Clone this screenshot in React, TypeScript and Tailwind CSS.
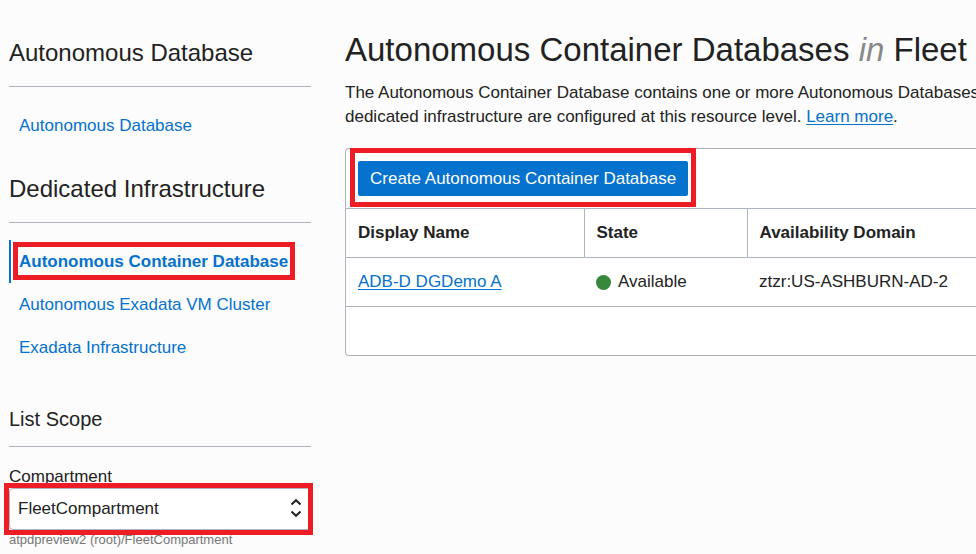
import type { ReactNode } from "react";

function Highlight({ className }: { className: string }) {
  return (
    <span
      aria-hidden="true"
      className={`pointer-events-none absolute border-5 border-[#ee1c25] ${className}`}
    />
  );
}

function NavItem({ active = false, children }: { active?: boolean; children: ReactNode }) {
  return (
    <li
      className={`relative flex h-[43px] items-center border-l-2 pl-2 ${
        active ? "border-[#0572ce] font-bold" : "border-transparent"
      }`}
    >
      <a href="#" aria-current={active ? "page" : undefined} className="text-[#0572ce]">
        {children}
      </a>
      {active && <Highlight className="top-0.5 left-0.5 h-[38px] w-[282px]" />}
    </li>
  );
}

function SectionTitle({ children }: { children: ReactNode }) {
  return (
    <h2 className="border-b border-[#aeb5bf] pb-[19px] text-2xl leading-7">{children}</h2>
  );
}

function TextLink({ children }: { children: ReactNode }) {
  return (
    <a href="#" className="text-[#0572ce] underline decoration-1 underline-offset-2">
      {children}
    </a>
  );
}

function Sidebar() {
  return (
    <aside className="w-[302px] shrink-0 pt-[39px]">
      <nav aria-label="Autonomous Database">
        <SectionTitle>Autonomous Database</SectionTitle>
        <ul className="pt-[17px]">
          <NavItem>Autonomous Database</NavItem>
        </ul>
      </nav>
      <nav aria-label="Dedicated Infrastructure" className="pt-7">
        <SectionTitle>Dedicated Infrastructure</SectionTitle>
        <ul className="pt-[17px]">
          <NavItem active>Autonomous Container Database</NavItem>
          <NavItem>Autonomous Exadata VM Cluster</NavItem>
          <NavItem>Exadata Infrastructure</NavItem>
        </ul>
      </nav>
      <section className="pt-9">
        <h2 className="border-b border-[#aeb5bf] pb-[13px] text-xl leading-7">List Scope</h2>
        <label htmlFor="compartment" className="block pt-[19px] leading-[22px]">
          Compartment
        </label>
        <div className="relative">
          <select
            id="compartment"
            className="block h-[42px] w-full appearance-none rounded-sm border border-[#aeb5bf] bg-white px-2"
          >
            <option>FleetCompartment</option>
          </select>
          <svg
            aria-hidden="true"
            viewBox="0 0 12 20"
            className="pointer-events-none absolute top-2.5 right-[9px] h-5 w-3 fill-none stroke-[#222] stroke-2"
          >
            <path d="M1.5 6.5 6 2.2l4.500 4.300M1.500 13.500 6 17.800l4.500-4.300" />
          </svg>
          <Highlight className="-top-[5px] -right-0.5 -bottom-[5px] -left-[5px]" />
        </div>
        <p className="text-[13px] leading-5 text-[#777]">atpdpreview2 (root)/FleetCompartment</p>
      </section>
    </aside>
  );
}

function DatabaseTable() {
  return (
    <table className="w-full table-fixed border-collapse text-left">
      <colgroup>
        <col className="w-[238px]" />
        <col className="w-[163px]" />
        <col />
      </colgroup>
      <thead>
        <tr className="h-[49px] border-y border-[#aeb5bf]">
          <th className="border-r border-[#aeb5bf] px-3">Display Name</th>
          <th className="border-r border-[#aeb5bf] px-3">State</th>
          <th className="px-3">Availability Domain</th>
        </tr>
      </thead>
      <tbody>
        <tr className="h-[49px] border-b border-[#aeb5bf]">
          <td className="px-3">
            <TextLink>ADB-D DGDemo A</TextLink>
          </td>
          <td className="px-3">
            <span className="flex items-center gap-[7px]">
              <span className="size-[15px] rounded-full bg-[#37883b]" />
              Available
            </span>
          </td>
          <td className="px-3">ztzr:US-ASHBURN-AD-2</td>
        </tr>
      </tbody>
    </table>
  );
}

export default function App() {
  return (
    <div className="flex min-h-screen gap-[34px] overflow-hidden bg-[#fcfcfc] pl-[9px] font-['Liberation_Sans',Arial,sans-serif] text-[17px] leading-6 text-[#222]">
      <Sidebar />
      <main className="min-w-0 flex-1 pt-[30px]">
        <h1 className="text-[33px] leading-10 whitespace-nowrap">
          Autonomous Container Databases <em className="text-[#888]">in</em> Fleet
        </h1>
        <p className="pt-[11px] whitespace-nowrap">
          The Autonomous Container Database contains one or more Autonomous Databases
          <br />
          dedicated infrastructure are configured at this resource level.{" "}
          <TextLink>Learn more</TextLink>.
        </p>
        <section className="mt-[19px] rounded-l-sm border-y border-l border-[#aeb5bf] bg-white">
          <div className="flex px-3 py-3">
            <div className="relative">
              <button
                type="button"
                className="block h-[35px] rounded-xs bg-[#0572ce] px-3 text-white"
              >
                Create Autonomous Container Database
              </button>
              <Highlight className="-inset-x-2 -top-[13px] -bottom-[11px]" />
            </div>
          </div>
          <DatabaseTable />
          <div className="h-12" />
        </section>
      </main>
    </div>
  );
}
